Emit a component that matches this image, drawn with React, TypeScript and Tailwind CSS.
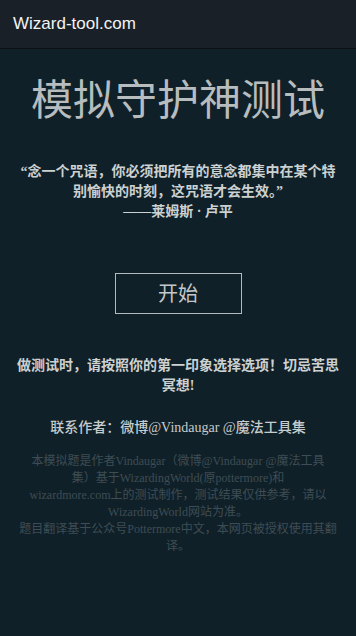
export default function App() {
  const serif = { fontFamily: '"Liberation Serif", "Noto Sans CJK SC", serif' };
  return (
    <div className="min-h-[636px] w-full bg-[#102028]" style={serif}>
      <header className="flex h-[49px] items-center border-b border-[#0b1014] bg-[#1a2027] px-[13px]">
        <span
          className="text-[17px] text-[#f2f4f5]"
          style={{ fontFamily: '"Liberation Sans", Arial, sans-serif' }}
        >
          Wizard-tool.com
        </span>
      </header>

      <main className="flex flex-col items-center px-4">
        <h1 className="mt-[27px] text-[42px] leading-[50px] text-[#b7bdbf]">模拟守护神测试</h1>

        <div className="mt-[36px] text-center text-[14px] leading-[20px] font-bold text-[#ccd1d2]">
          <p>“念一个咒语，你必须把所有的意念都集中在某个特别愉快的时刻，这咒语才会生效。”</p>
          <p>——莱姆斯 · 卢平</p>
        </div>

        <button className="mt-[51px] flex h-[41px] w-[127px] items-center justify-center border border-[#b3babc] text-[20px] text-[#c3c9cb]">
          开始
        </button>

        <p className="mt-[42px] text-center text-[14px] leading-[20px] font-bold text-[#ccd1d2]">
          做测试时，请按照你的第一印象选择选项！切忌苦思冥想!
        </p>

        <p className="mt-[22px] text-center text-[14px] leading-[20px] font-medium text-[#c6cbcc]">
          联系作者：微博@Vindaugar @魔法工具集
        </p>

        <div className="mt-[15px] text-center text-[12px] leading-[17px] text-[#3e4d54]">
          <p>
            本模拟题是作者Vindaugar（微博@Vindaugar @魔法工具
            <br />
            集）基于WizardingWorld(原pottermore)和
            <br />
            wizardmore.com上的测试制作，测试结果仅供参考，请以
            <br />
            WizardingWorld网站为准。
          </p>
          <p>题目翻译基于公众号Pottermore中文，本网页被授权使用其翻译。</p>
        </div>
      </main>
    </div>
  );
}
